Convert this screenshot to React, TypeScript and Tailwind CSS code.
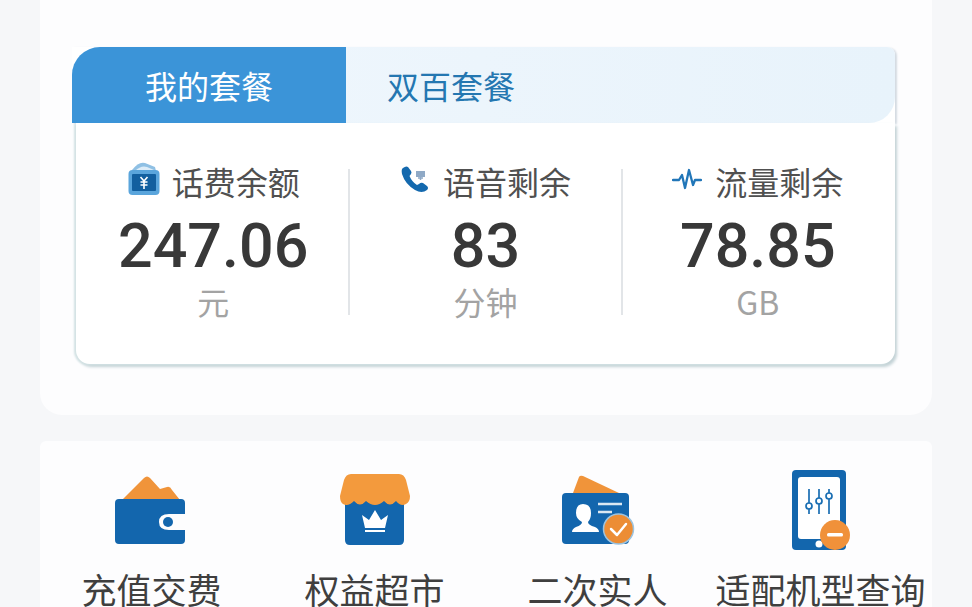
const cjk = "font-['Noto_Sans_CJK_SC','Noto_Sans',sans-serif]";

function MoneyIcon() {
  return (
    <svg width="34" height="36" viewBox="0 0 34 36" className="mb-[5px] mr-[11px]">
      <path d="M5 9 Q12 0 18 2 L28 6 L29 10 Z" fill="#8fc0e4" />
      <path d="M8 10 Q14 4 20 6 L27 9 L27 11 Z" fill="#dcecf8" />
      <rect x="1.5" y="9" width="31" height="25" rx="4" fill="#5aa5dc" />
      <rect x="5" y="13" width="24" height="17" rx="1" fill="#125f9f" />
      <path d="M13.5 16 L17 20 L20.5 16 M13.5 21 H20.5 M13.5 24 H20.5 M17 20 V28" fill="none" stroke="#fff" strokeWidth="1.6" />
    </svg>
  );
}

function CallIcon() {
  return (
    <svg width="30" height="30" viewBox="0 0 30 30" className="mb-[2px] mr-[13px]">
      <path d="M3 3 Q1 4 2 9 Q5 19 15 25 Q22 29 27 25 Q29 23 27 21 L23 18 Q21 17 19 19 L17 20 Q12 17 9.5 11 L11 9 Q12 7.5 11 6 L8 2 Q6 0.5 3 3 Z" fill="#1469ae" />
      <rect x="16" y="6" width="9" height="6" fill="#8fa9c6" />
      <path d="M18 13 H23 M20.5 12 V15" stroke="#8fa9c6" strokeWidth="1.5" />
    </svg>
  );
}

function PulseIcon() {
  return (
    <svg width="30" height="26" viewBox="0 0 30 26" className="mb-[3px] mr-[13px]">
      <path d="M1 13 H7 L10 8 L13 21 L17 3 L21 18 L23 13 H29" fill="none" stroke="#2176b8" strokeWidth="2.3" strokeLinejoin="round" strokeLinecap="round" />
    </svg>
  );
}

function WalletIcon() {
  return (
    <svg width="70" height="70" viewBox="0 0 70 70" className="mr-[3px]">
      <path d="M7 25 L29 3 Q32 0 35 3 L45 14 L52 12 Q55 11 57 15 L65 25 Z" fill="#f0943a" />
      <path d="M4 24 H66 Q70 24 70 28 V39 H54 Q44 39 44 47 Q44 55 54 55 H70 V65 Q70 69 66 69 H4 Q0 69 0 65 V28 Q0 24 4 24 Z" fill="#1366ad" />
      <circle cx="53" cy="47" r="5" fill="#1366ad" />
    </svg>
  );
}

function StoreIcon() {
  return (
    <svg width="70" height="72" viewBox="0 0 70 72">
      <path d="M5 26 H64 V66 Q64 71 59 71 H10 Q5 71 5 66 Z" fill="#1366ad" />
      <path d="M11 0 H59 Q64 0 66 6 L70 22 Q70 28 66 30 Q61 33 56 27 Q50 34 44 27 Q35 35 26 27 Q20 34 14 27 Q8 33 3 30 Q0 28 0 22 L4 6 Q6 0 11 0 Z" fill="#f39a3d" />
      <path d="M22 41 L29 46 L35 36 L41 46 L48 41 L45 54 H25 Z M25 56 H45 V58 H25 Z" fill="#fff" />
    </svg>
  );
}

function IdCardIcon() {
  return (
    <svg width="74" height="70" viewBox="0 0 74 70">
      <path d="M12 18 L18 2 Q19 0 22 1 L58 18 Z" fill="#f0943a" />
      <rect x="1" y="18" width="67" height="51" rx="4" fill="#1366ad" />
      <path d="M22 29 Q30 29 30 38 Q30 44 27 47 Q27 50 34 52 Q38 54 38 57 H11 Q11 54 15 52 Q21 50 21 47 Q15 44 15 38 Q15 29 22 29 Z" fill="#fff" />
      <path d="M37 29 H61 M37 37 H51" stroke="#fff" strokeWidth="2.5" opacity="0.85" />
      <circle cx="57.5" cy="54" r="15" fill="#ec8d35" stroke="#9cc3df" strokeWidth="1.5" />
      <path d="M50 54 L56 60 L65 49" fill="none" stroke="#fff" strokeWidth="2.5" strokeLinecap="round" strokeLinejoin="round" />
    </svg>
  );
}

function PhoneIcon() {
  return (
    <svg width="60" height="82" viewBox="0 0 60 82">
      <rect x="1" y="1" width="54" height="80" rx="4" fill="#1366ad" />
      <rect x="7" y="8" width="42" height="62" rx="3" fill="#fff" />
      <circle cx="28" cy="75" r="3.5" fill="#fff" />
      <g fill="none" stroke="#1b6fb3" strokeWidth="1.7">
        <path d="M18 20 V34 M18 40 V45" />
        <circle cx="18" cy="37" r="3" />
        <path d="M28 20 V29 M28 35 V45" />
        <circle cx="28" cy="32" r="3" />
        <path d="M38 20 V24 M38 30 V45" />
        <circle cx="38" cy="27" r="3" />
      </g>
      <circle cx="44" cy="66" r="15" fill="#f0913a" />
      <rect x="36" y="64" width="16" height="3.5" rx="1.5" fill="#fff" />
    </svg>
  );
}

const stats = [
  { icon: <MoneyIcon />, label: "话费余额", value: "247.06", unit: "元" },
  { icon: <CallIcon />, label: "语音剩余", value: "83", unit: "分钟" },
  { icon: <PulseIcon />, label: "流量剩余", value: "78.85", unit: "GB" },
];

const services = [
  { icon: <WalletIcon />, label: "充值交费" },
  { icon: <StoreIcon />, label: "权益超市" },
  { icon: <IdCardIcon />, label: "二次实人" },
  { icon: <PhoneIcon />, label: "适配机型查询" },
];

export default function App() {
  return (
    <div className={`h-[607px] w-[972px] overflow-hidden bg-[#f6f7f9] px-10 ${cjk}`}>
      <div className="h-[415px] rounded-b-[22px] bg-[#fdfdfe] pl-8 pr-[37px] pt-[47px]">
        <div className="rounded-tr-[8px] bg-white shadow-[2px_1px_2px_#d4dbe2]">
          <div className="flex h-[76px] rounded-tl-[28px] rounded-tr-[8px] rounded-br-[26px] bg-gradient-to-r from-[#f0f7fd] to-[#e8f3fb]">
            <div className="flex w-[274px] items-center justify-center rounded-tl-[28px] bg-[#3b94d8] text-[32px] text-white">
              我的套餐
            </div>
            <div className="pl-[41px] text-[32px] leading-[76px] text-[#2477b1]">双百套餐</div>
          </div>
        </div>
        <div className="ml-1 flex h-[241px] rounded-b-[14px] bg-white px-[2px] pt-[46px] shadow-[-2px_1px_2px_#d3e2e4,2px_3px_3px_#c3d2d6]">
          {stats.map((s, i) => (
            <div
              key={s.label}
              className={`flex h-[146px] flex-1 flex-col items-center ${i < 2 ? "border-r-2 border-[#e2e5e8]" : ""}`}
            >
              <div className="flex h-[24px] items-center text-[32px] leading-none text-[#505050]">
                {s.icon}
                {s.label}
              </div>
              <div className="mt-[22px] font-['Roboto',sans-serif] text-[61px] font-medium leading-[62px] text-[#383838]">
                {s.value}
              </div>
              <div className="mt-[6px] text-[32px] leading-[36px] text-[#a3a3a3]">{s.unit}</div>
            </div>
          ))}
        </div>
      </div>
      <div className="mt-[26px] grid h-[166px] grid-cols-4 rounded-t-[6px] bg-[#fdfdfe]">
        {services.map((s) => (
          <div key={s.label} className="flex flex-col items-center">
            <div className="flex h-[112px] items-center justify-center pt-[25px]">{s.icon}</div>
            <div className="mt-[18px] whitespace-nowrap text-[35px] leading-[36px] text-[#3f3f3f]">{s.label}</div>
          </div>
        ))}
      </div>
    </div>
  );
}
